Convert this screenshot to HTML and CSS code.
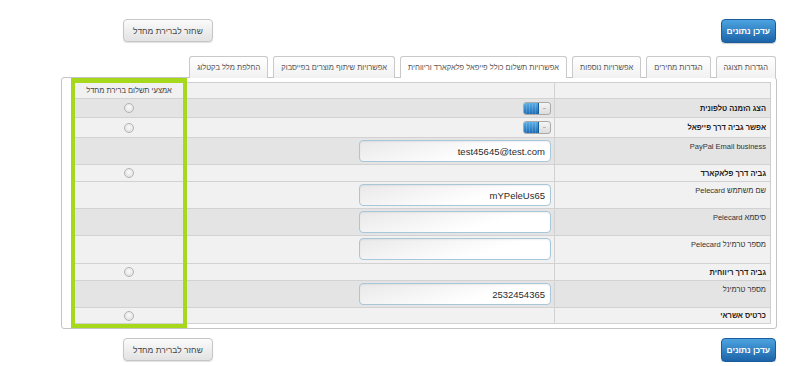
FILE: index.html
```html
<!DOCTYPE html>
<html lang="he" dir="rtl">
<head>
    <meta charset="UTF-8">
    <meta name="viewport" content="width=device-width, initial-scale=1.0">
    <title>הגדרות תשלום</title>
    <link rel="stylesheet" href="styles.css">
</head>
<body>
    <div class="page">
        <div class="actions">
            <button type="button" class="btn btn-primary">עדכן נתונים</button>
            <button type="button" class="btn btn-default">שחזר לברירת מחדל</button>
        </div>

        <ul class="tabs">
            <li class="tab">הגדרות תצוגה</li>
            <li class="tab">הגדרות מחירים</li>
            <li class="tab">אפשרויות נוספות</li>
            <li class="tab active">אפשרויות תשלום כולל פייפאל פלאקארד וריווחית</li>
            <li class="tab">אפשרויות שיתוף מוצרים בפייסבוק</li>
            <li class="tab">החלפת מלל בקטלוג</li>
        </ul>

        <div class="panel">
            <div class="settings">
                <div class="settings-main">
                    <div class="cell light"></div>
                    <div class="cell light"></div>

                    <div class="cell gray label bold">הצג הזמנה טלפונית</div>
                    <div class="cell gray field"><span class="switch"><span class="switch-on"></span><span class="switch-grip"></span></span></div>

                    <div class="cell light label bold">אפשר גביה דרך פייפאל</div>
                    <div class="cell light field"><span class="switch"><span class="switch-on"></span><span class="switch-grip"></span></span></div>

                    <div class="cell gray label">PayPal Email business</div>
                    <div class="cell gray field top"><input class="text-input" type="text" value="test45645@test.com"></div>

                    <div class="cell light label bold">גביה דרך פלאקארד</div>
                    <div class="cell light"></div>

                    <div class="cell light label">שם משתמש Pelecard</div>
                    <div class="cell light field top"><input class="text-input" type="text" value="mYPeleUs65"></div>

                    <div class="cell gray label">סיסמא Pelecard</div>
                    <div class="cell gray field top"><input class="text-input" type="text" value=""></div>

                    <div class="cell light label">מספר טרמינל Pelecard</div>
                    <div class="cell light field top"><input class="text-input" type="text" value=""></div>

                    <div class="cell light label bold">גביה דרך ריווחית</div>
                    <div class="cell light"></div>

                    <div class="cell gray label">מספר טרמינל</div>
                    <div class="cell gray field top"><input class="text-input" type="text" value="2532454365"></div>

                    <div class="cell light label bold">כרטיס אשראי</div>
                    <div class="cell light"></div>
                </div>

                <!-- default payment method column -->
                <div class="settings-default">
                    <div class="cell light head">אמצעי תשלום ברירת מחדל</div>
                    <div class="cell gray"><span class="radio"></span></div>
                    <div class="cell light"><span class="radio"></span></div>
                    <div class="cell gray"></div>
                    <div class="cell light"><span class="radio"></span></div>
                    <div class="cell light"></div>
                    <div class="cell gray"></div>
                    <div class="cell light"></div>
                    <div class="cell light"><span class="radio"></span></div>
                    <div class="cell gray"></div>
                    <div class="cell light"><span class="radio"></span></div>
                </div>
            </div>
        </div>

        <div class="actions bottom">
            <button type="button" class="btn btn-primary">עדכן נתונים</button>
            <button type="button" class="btn btn-default">שחזר לברירת מחדל</button>
        </div>
    </div>
</body>
</html>
```

FILE: styles.css
```css
* {
    margin: 0;
    padding: 0;
    box-sizing: border-box;
    font-family: 'Liberation Sans', Arial, 'DejaVu Sans', sans-serif;
}

body {
    background: #fff;
    color: #333;
}

.page {
    margin: 0 23px 0 61px;
    padding-top: 19px;
}

/* buttons */
.actions {
    display: flex;
    justify-content: space-between;
    align-items: flex-start;
    padding: 0 1px 0 62px;
}

.actions.bottom {
    margin-top: 9px;
}

.btn {
    border-radius: 4px;
    font-size: 8.4px;
    cursor: pointer;
}

.btn-primary {
    height: 24px;
    padding: 0 5px;
    background: linear-gradient(#4ca3df, #1c64a9);
    border: 1px solid #1b5d9c;
    color: #fff;
    font-weight: bold;
    box-shadow: 0 1px 1px rgba(0, 0, 0, 0.2);
}

.btn-default {
    height: 23px;
    padding: 0 9px;
    background: linear-gradient(#fbfbfb, #e2e2e2);
    border: 1px solid #c6c6c6;
    color: #444;
    box-shadow: 0 1px 1px rgba(0, 0, 0, 0.12);
}

/* tabs */
.tabs {
    list-style: none;
    display: flex;
    gap: 5px;
    margin-top: 13px;
    padding-right: 1px;
}

.tab {
    height: 22px;
    line-height: 21px;
    padding: 0 7px;
    font-size: 7.5px;
    color: #555;
    background: linear-gradient(#fff, #f1f1f1);
    border: 1px solid #c9c9c9;
    border-bottom: none;
    border-radius: 3px 3px 0 0;
    white-space: nowrap;
}

.tab.active {
    background: #fff;
}

/* panel + settings table */
.panel {
    margin-top: -1px;
    height: 252px;
    padding: 4px 5px 0 9px;
    border: 1px solid #c4c4c4;
    border-radius: 3px;
    background: #fff;
}

.settings {
    display: flex;
    align-items: flex-start;
}

.settings-main,
.settings-default {
    display: grid;
    grid-template-rows: 16px 19px 20px 27px 17px 27px 27px 28px 17px 27px 16px;
}

.settings-main {
    width: 584px;
    grid-template-columns: 216px 368px;
    border-top: 1px solid #cfcfcf;
    border-right: 1px solid #cfcfcf;
}

.settings-default {
    width: 117px;
    margin-top: -4px;
    border: 4px solid #a6d81c;
    border-top-width: 5px;
    background: #f1f1f1;
}

.cell {
    display: flex;
    align-items: center;
    border-bottom: 1px solid #d2d2d2;
    font-size: 7.5px;
    color: #333;
}

.cell.light {
    background: #f1f1f1;
}

.cell.gray {
    background: #e4e4e4;
}

.settings-main .cell:nth-child(odd) {
    border-left: 1px solid #d2d2d2;
}

.settings-default .cell {
    justify-content: center;
}

.label {
    align-items: flex-start;
    padding: 4px 4px 0;
}

.label.bold {
    align-items: center;
    padding-top: 0;
    font-weight: bold;
    color: #222;
}

.field {
    padding-right: 3px;
}

.field.top {
    align-items: flex-start;
    padding-top: 2px;
}

.head {
    color: #444;
}

.text-input {
    width: 192px;
    height: 22px;
    padding: 0 5px;
    border: 1px solid #a9c7da;
    border-radius: 4px;
    background: linear-gradient(165deg, #e9e9e9, #fff 65%);
    box-shadow: inset 0 1px 2px rgba(0, 0, 0, 0.06);
    font-size: 9.5px;
    color: #2a2a2a;
    text-align: right;
}

.radio {
    width: 10px;
    height: 10px;
    border: 1px solid #b3b3b3;
    border-radius: 50%;
    background: radial-gradient(circle at 50% 40%, #fafafa, #dcdcdc);
}

.switch {
    display: flex;
    flex-direction: row-reverse;
    width: 28px;
    height: 13px;
    border: 1px solid #a9a9a9;
    border-radius: 3px;
    background: linear-gradient(#f5f5f5, #dcdcdc);
    overflow: hidden;
}

.switch-on {
    width: 15px;
    background: repeating-linear-gradient(90deg, transparent 0 2px, rgba(255, 255, 255, 0.15) 2px 3px),
        linear-gradient(#5aaee6, #1d6db5);
    border-right: 1px solid #1a5c9a;
}

.switch-grip {
    flex: 1;
    position: relative;
}

.switch-grip::after {
    content: "";
    position: absolute;
    top: 5px;
    left: 4px;
    width: 3px;
    height: 1px;
    background: #b8b8b8;
}
```
